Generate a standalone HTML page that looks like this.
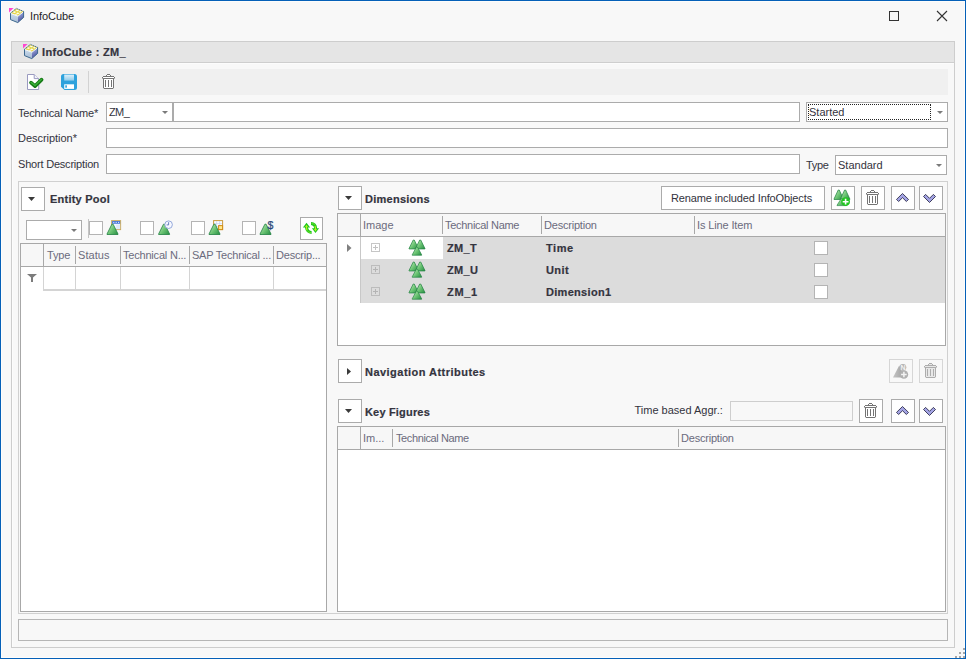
<!DOCTYPE html>
<html>
<head>
<meta charset="utf-8">
<title>InfoCube</title>
<style>
html,body{margin:0;padding:0;}
body{width:966px;height:659px;overflow:hidden;background:#f8f8f8;font-family:"Liberation Sans",sans-serif;font-size:11px;color:#33333d;}
#win{position:absolute;left:0;top:0;width:964px;height:657px;border:1px solid #0560b8;background:#f8f8f8;overflow:hidden;}
#win *{box-sizing:border-box;}
.abs{position:absolute;}
.t{position:absolute;white-space:nowrap;line-height:13px;height:13px;}
.b{font-weight:bold;color:#34343e;-webkit-text-stroke:0.2px #34343e;}
.h{color:#6b6b7d;}
.box{position:absolute;background:#fff;border:1px solid #ababab;}
.btn{position:absolute;background:#fff;border:1px solid #ababab;}
.btn.dis{background:#f8f8f8;border-color:#d6d6d6;}
.cb{position:absolute;width:14px;height:14px;background:#fff;border:1px solid #b4b4b4;}
.vsep{position:absolute;width:1px;background:#a8a8a8;}
svg{position:absolute;overflow:visible;}
</style>
</head>
<body>
<div id="win">
<!-- coordinates inside #win are page coords minus 1 -->
<div id="root" class="abs" style="left:-1px;top:-1px;width:966px;height:659px;">


<!-- SVG DEFS -->
<svg width="0" height="0" style="left:0;top:0;">
<defs>
<linearGradient id="gTri" x1="0.1" y1="0.2" x2="1" y2="0.9"><stop offset="0" stop-color="#b4e6ae"/><stop offset="0.45" stop-color="#6cc474"/><stop offset="1" stop-color="#2c9246"/></linearGradient>
<linearGradient id="gGrey" x1="0" y1="0" x2="1" y2="0"><stop offset="0" stop-color="#c4c4c4"/><stop offset="1" stop-color="#9c9c9c"/></linearGradient>
<linearGradient id="cubeL" x1="0" y1="0" x2="0" y2="1"><stop offset="0" stop-color="#ccdcec"/><stop offset="1" stop-color="#a6bcd4"/></linearGradient>
<linearGradient id="cubeR" x1="0" y1="0" x2="0.3" y2="1"><stop offset="0" stop-color="#b0c8ec"/><stop offset="1" stop-color="#4c4c9c"/></linearGradient>
<linearGradient id="saveLbl" x1="0" y1="0" x2="0" y2="1"><stop offset="0" stop-color="#dff1fb"/><stop offset="1" stop-color="#8fcbea"/></linearGradient>
<g id="cube">
  <polygon points="0,0 4.6,0 0,4.6" fill="#ff46d0"/>
  <polygon points="7.3,0.4 14.6,3.4 9,8 1.5,5.2" fill="#e6d84e"/>
  <path d="M5.2,3.2 l2,0.8 -1.6,1 -2,-0.8z M8.6,4.4 l2,0.8 -1.6,1 -2,-0.8z M8,1.6 l2,0.8 -1.4,0.9 -2,-0.8z M11.2,2.9 l1.8,0.7 -1.4,1 -1.8,-0.8z M6.6,6 l1.8,0.7 -0.6,0.6 -2.2,-0.8z" fill="#fdfdf4"/>
  <polygon points="1.5,5.2 9,8 8.8,14.6 1.5,11.6" fill="url(#cubeL)"/>
  <polygon points="9,8 14.6,3.4 14.6,9.4 8.8,14.6" fill="url(#cubeR)"/>
  <path d="M1.9,5.6 L9,8.2 L14.2,4" stroke="#fafafa" stroke-width="0.9" fill="none"/><path d="M1.5,5.2 L7.3,0.4 L14.6,3.4" stroke="#4a7098" stroke-width="1" fill="none" stroke-dasharray="1.5 0.6"/><path d="M14.6,3.4 L14.6,9.4 L8.8,14.6 L1.5,11.6 L1.5,5.2" stroke="#3c688e" stroke-width="1" fill="none" stroke-linejoin="round"/>
</g>
<g id="trashBg"><rect x="1" y="3" width="11" height="1"/><rect x="2" y="5" width="9" height="9"/><rect x="5" y="1" width="3" height="1"/></g>
<g id="trash" shape-rendering="crispEdges">
  <rect x="5" y="0" width="3" height="1"/><rect x="4" y="1" width="1" height="1"/><rect x="8" y="1" width="1" height="1"/>
  <rect x="1" y="2" width="11" height="1"/><rect x="0" y="3" width="1" height="1"/><rect x="12" y="3" width="1" height="1"/>
  <rect x="0" y="4" width="1" height="1" opacity="0.55"/><rect x="12" y="4" width="1" height="1" opacity="0.55"/>
  <rect x="1" y="4" width="11" height="1"/>
  <rect x="1" y="5" width="1" height="9"/><rect x="11" y="5" width="1" height="9"/>
  <rect x="2" y="14" width="9" height="1"/><rect x="1" y="14" width="1" height="1" opacity="0.3"/><rect x="11" y="14" width="1" height="1" opacity="0.3"/>
  <rect x="3" y="6" width="1" height="7"/><rect x="6" y="6" width="1" height="7"/><rect x="9" y="6" width="1" height="7"/>
</g>
<polygon id="tri" points="4.9,0 6.1,0 11,9.8 11,10.3 0,10.3 0,9.8"/>
<g id="tree3">
  <use href="#tri" transform="translate(0,0) scale(0.86,0.87)" fill="url(#gTri)" stroke="#1f8040" stroke-width="0.8"/>
  <use href="#tri" transform="translate(6.5,0) scale(0.86,0.87)" fill="url(#gTri)" stroke="#1f8040" stroke-width="0.8"/>
  <use href="#tri" transform="translate(3.2,7) scale(0.86,0.8)" fill="url(#gTri)" stroke="#1f8040" stroke-width="0.8"/>
</g>
<polygon id="chevUp" points="0.5,6.4 6.5,0.5 12.5,6.4 10.4,8.5 6.5,4.7 2.6,8.5"/>
<polygon id="chevDn" points="0.5,2.5 2.6,0.4 6.5,4.3 10.4,0.4 12.5,2.5 6.5,8.5"/>
</defs>
</svg>

<div class="abs" style="left:1px;top:1px;width:964px;height:657px;border:1px solid #fdfdfc;"></div>
<!-- TITLE BAR -->
<div class="t" style="left:30px;top:10px;letter-spacing:-0.08px;color:#1e1e28;">InfoCube</div>
<div class="abs" style="left:889px;top:11px;width:10px;height:10px;border:1px solid #333;"></div>
<svg style="left:937px;top:11px;" width="10" height="10" viewBox="0 0 10 10"><path d="M0 0 L10 10 M10 0 L0 10" stroke="#333" stroke-width="1.1" fill="none"/></svg>

<!-- MAIN PANEL -->
<div class="abs" id="panel" style="left:11px;top:41px;width:944px;height:607px;border:1px solid #cdcdcd;"></div>
<div class="abs" style="left:12px;top:42px;width:942px;height:20px;background:#e5e5e5;"></div>
<div class="abs" style="left:12px;top:62px;width:942px;height:1px;background:#cecece;"></div>
<div class="abs" style="left:12px;top:63px;width:942px;height:1px;background:#fcfcfc;"></div>
<div class="abs" style="left:12px;top:63px;width:1px;height:584px;background:#fcfcfc;"></div>
<div class="t b" style="left:42px;top:46px;letter-spacing:0.33px;">InfoCube : ZM_</div>

<!-- TOOLBAR -->
<div class="abs" style="left:18px;top:69px;width:930px;height:26px;background:#f0f0f0;"></div>
<div class="abs" style="left:88px;top:71px;width:1px;height:22px;background:#d2d2d2;"></div>

<!-- FORM -->
<div class="t" style="left:18px;top:107px;letter-spacing:-0.17px;">Technical Name*</div>
<div class="t" style="left:18px;top:132px;letter-spacing:-0.03px;">Description*</div>
<div class="t" style="left:18px;top:158px;letter-spacing:-0.2px;">Short Description</div>
<div class="box" style="left:106px;top:102px;width:67px;height:20px;"></div>
<div class="t" style="left:109px;top:106px;letter-spacing:-0.6px;">ZM_</div>
<div class="box" style="left:173px;top:102px;width:627px;height:20px;"></div>
<div class="box" style="left:806px;top:102px;width:142px;height:20px;"></div>
<div class="abs" style="left:808px;top:104px;width:123px;height:16px;border:1px dotted #222;"></div>
<div class="t" style="left:809px;top:106px;">Started</div>
<div class="box" style="left:106px;top:128px;width:842px;height:20px;"></div>
<div class="box" style="left:106px;top:154px;width:694px;height:20px;"></div>
<div class="t" style="left:806px;top:159px;letter-spacing:-0.34px;">Type</div>
<div class="box" style="left:835px;top:155px;width:112px;height:20px;"></div>
<div class="t" style="left:838px;top:159px;">Standard</div>

<!-- GROUP BOX -->
<div class="abs" style="left:18px;top:181px;width:930px;height:433px;border:1px solid #d0d0d0;"></div>

<!-- ENTITY POOL -->
<div class="btn" style="left:21px;top:187px;width:24px;height:24px;"></div>
<div class="t b" style="left:50px;top:193px;letter-spacing:0.23px;">Entity Pool</div>
<div class="box" style="left:26px;top:220px;width:56px;height:20px;"></div>
<div class="vsep" style="left:88px;top:219px;height:19px;background:#c4c4c4;"></div>
<div class="cb" style="left:89px;top:221px;"></div>
<div class="cb" style="left:140px;top:221px;"></div>
<div class="cb" style="left:191px;top:221px;"></div>
<div class="cb" style="left:242px;top:221px;"></div>
<div class="btn" style="left:300px;top:217px;width:23px;height:23px;"></div>

<!-- entity grid -->
<div class="abs" style="left:20px;top:243px;width:307px;height:369px;border:1px solid #a8a8a8;background:#fff;"></div>
<div class="abs" style="left:21px;top:244px;width:305px;height:22px;background:#f7f7f7;"></div>
<div class="abs" style="left:21px;top:266px;width:305px;height:1px;background:#a8a8a8;"></div>
<div class="vsep" style="left:43px;top:244px;height:22px;"></div>
<div class="vsep" style="left:75px;top:246px;height:18px;"></div>
<div class="vsep" style="left:120px;top:246px;height:18px;"></div>
<div class="vsep" style="left:189px;top:246px;height:18px;"></div>
<div class="vsep" style="left:273px;top:246px;height:18px;"></div>
<div class="t h" style="left:47px;top:249px;letter-spacing:-0.19px;">Type</div>
<div class="t h" style="left:78px;top:249px;letter-spacing:0.07px;">Status</div>
<div class="t h" style="left:123px;top:249px;letter-spacing:-0.2px;">Technical N...</div>
<div class="t h" style="left:192px;top:249px;letter-spacing:-0.22px;">SAP Technical ...</div>
<div class="t h" style="left:276px;top:249px;letter-spacing:-0.2px;">Descrip...</div>
<!-- filter row -->
<div class="abs" style="left:43px;top:289px;width:283px;height:2px;background:#d4d4d4;"></div>
<div class="vsep" style="left:43px;top:267px;height:22px;background:#d4d4d4;"></div>
<div class="vsep" style="left:75px;top:267px;height:22px;background:#d4d4d4;"></div>
<div class="vsep" style="left:120px;top:267px;height:22px;background:#d4d4d4;"></div>
<div class="vsep" style="left:189px;top:267px;height:22px;background:#d4d4d4;"></div>
<div class="vsep" style="left:273px;top:267px;height:22px;background:#d4d4d4;"></div>

<!-- DIMENSIONS -->
<div class="btn" style="left:338px;top:186px;width:24px;height:24px;"></div>
<div class="t b" style="left:365px;top:193px;letter-spacing:0.26px;">Dimensions</div>
<div class="btn" style="left:661px;top:186px;width:164px;height:24px;"></div>
<div class="t" style="left:671px;top:192px;letter-spacing:-0.12px;">Rename included InfoObjects</div>
<div class="btn" style="left:831px;top:186px;width:24px;height:24px;"></div>
<div class="btn" style="left:861px;top:186px;width:24px;height:24px;"></div>
<div class="btn" style="left:891px;top:186px;width:24px;height:24px;"></div>
<div class="btn" style="left:919px;top:186px;width:24px;height:24px;"></div>

<!-- dimension grid -->
<div class="abs" style="left:337px;top:213px;width:609px;height:133px;border:1px solid #a8a8a8;background:#fff;"></div>
<div class="abs" style="left:338px;top:214px;width:607px;height:22px;background:#f7f7f7;"></div>
<div class="abs" style="left:338px;top:236px;width:607px;height:1px;background:#a8a8a8;"></div>
<div class="vsep" style="left:360px;top:214px;height:22px;"></div>
<div class="vsep" style="left:360px;top:237px;height:66px;background:#c8c8c8;"></div>
<div class="vsep" style="left:442px;top:216px;height:18px;"></div>
<div class="vsep" style="left:541px;top:216px;height:18px;"></div>
<div class="vsep" style="left:694px;top:216px;height:18px;"></div>
<div class="t h" style="left:363px;top:219px;">Image</div>
<div class="t h" style="left:445px;top:219px;letter-spacing:-0.29px;">Technical Name</div>
<div class="t h" style="left:544px;top:219px;letter-spacing:-0.21px;">Description</div>
<div class="t h" style="left:697px;top:219px;letter-spacing:-0.13px;">Is Line Item</div>
<!-- rows -->
<div class="abs" style="left:443px;top:237px;width:502px;height:22px;background:#dcdcdc;"></div>
<div class="abs" style="left:361px;top:259px;width:584px;height:44px;background:#dcdcdc;"></div>
<div class="t b" style="left:447px;top:242px;letter-spacing:0.37px;">ZM_T</div>
<div class="t b" style="left:447px;top:264px;letter-spacing:0.37px;">ZM_U</div>
<div class="t b" style="left:447px;top:286px;letter-spacing:0.7px;">ZM_1</div>
<div class="t b" style="left:546px;top:242px;letter-spacing:0.55px;">Time</div>
<div class="t b" style="left:546px;top:264px;letter-spacing:0.4px;">Unit</div>
<div class="t b" style="left:546px;top:286px;letter-spacing:0.3px;">Dimension1</div>
<div class="cb" style="left:814px;top:241px;"></div>
<div class="cb" style="left:814px;top:263px;"></div>
<div class="cb" style="left:814px;top:285px;"></div>

<!-- NAVIGATION ATTRIBUTES -->
<div class="btn" style="left:338px;top:359px;width:24px;height:24px;"></div>
<div class="t b" style="left:365px;top:366px;letter-spacing:0.47px;">Navigation Attributes</div>
<div class="btn dis" style="left:889px;top:359px;width:24px;height:24px;"></div>
<div class="btn dis" style="left:919px;top:359px;width:24px;height:24px;"></div>

<!-- KEY FIGURES -->
<div class="btn" style="left:338px;top:399px;width:24px;height:24px;"></div>
<div class="t b" style="left:365px;top:406px;letter-spacing:0.18px;">Key Figures</div>
<div class="t" style="left:634.5px;top:404px;letter-spacing:0px;">Time based Aggr.:</div>
<div class="abs" style="left:730px;top:401px;width:123px;height:20px;border:1px solid #cecece;background:#f8f8f8;"></div>
<div class="btn" style="left:859px;top:399px;width:24px;height:24px;"></div>
<div class="btn" style="left:891px;top:399px;width:24px;height:24px;"></div>
<div class="btn" style="left:919px;top:399px;width:24px;height:24px;"></div>
<!-- key fig grid -->
<div class="abs" style="left:337px;top:426px;width:609px;height:186px;border:1px solid #a8a8a8;background:#fff;"></div>
<div class="abs" style="left:338px;top:427px;width:607px;height:22px;background:#f7f7f7;"></div>
<div class="abs" style="left:338px;top:449px;width:607px;height:1px;background:#a8a8a8;"></div>
<div class="vsep" style="left:360px;top:427px;height:22px;"></div>
<div class="vsep" style="left:392px;top:429px;height:18px;"></div>
<div class="vsep" style="left:678px;top:429px;height:18px;"></div>
<div class="t h" style="left:363px;top:432px;">Im...</div>
<div class="t h" style="left:396px;top:432px;letter-spacing:-0.39px;">Technical Name</div>
<div class="t h" style="left:681px;top:432px;letter-spacing:-0.21px;">Description</div>

<!-- STATUS BOX -->
<div class="abs" style="left:18px;top:619px;width:930px;height:22px;border:1px solid #b6b6b6;"></div>


<!-- ICONS: title + header cube -->
<svg style="left:9px;top:8px;" width="16" height="16"><use href="#cube"/></svg>
<svg style="left:23px;top:44px;" width="16" height="16"><use href="#cube"/></svg>

<!-- toolbar icons -->
<svg style="left:27px;top:74px;" width="17" height="16">
  <path d="M0.5,0.5 L7.2,0.5 L11.7,5 L11.7,15.5 L0.5,15.5 Z" fill="#fff" stroke="#9a9ac0" stroke-width="1"/>
  <path d="M7.2,0.5 L7.2,4.6 L11.5,4.6" fill="#f2f2fa" stroke="#9a9ac0" stroke-width="1"/>
  <path d="M4,8.7 L8,12.1 L14.6,5.7" fill="none" stroke="#167a16" stroke-width="3.7" stroke-linecap="round" stroke-linejoin="round"/>
  <path d="M4.1,8.4 L8,11.6 L14.4,5.4" fill="none" stroke="#3cb43c" stroke-width="1.3" stroke-linecap="round" stroke-linejoin="round"/>
</svg>
<svg style="left:61px;top:74px;" width="16" height="16">
  <path d="M2.5,0 H13.5 Q16,0 16,2.5 V13.5 Q16,16 13.5,16 H3.5 L0,12.8 V2.5 Q0,0 2.5,0 Z" fill="#2ea2dc"/>
  <rect x="3.2" y="0.6" width="9.8" height="6" fill="url(#saveLbl)"/>
  <rect x="3.2" y="10.3" width="9.8" height="4.6" fill="#fff"/>
  <rect x="4.3" y="11.3" width="1.6" height="2.4" fill="#2ea2dc"/>
</svg>
<svg style="left:102px;top:74px;" width="14" height="16"><use href="#trashBg" fill="#fff"/><use href="#trash" fill="#747474"/></svg>

<!-- combo arrows -->
<svg style="left:162px;top:111px;" width="6" height="3"><polygon points="0,0 6,0 3,3" fill="#7a7a7a"/></svg>
<svg style="left:937px;top:111px;" width="6" height="3"><polygon points="0,0 6,0 3,3" fill="#7a7a7a"/></svg>
<svg style="left:936px;top:164px;" width="6" height="3"><polygon points="0,0 6,0 3,3" fill="#7a7a7a"/></svg>
<svg style="left:71px;top:229px;" width="6" height="3"><polygon points="0,0 6,0 3,3" fill="#7a7a7a"/></svg>

<!-- collapse arrows -->
<svg style="left:28px;top:197px;" width="7" height="4"><polygon points="0,0 7,0 3.5,4" fill="#3a3a3a"/></svg>
<svg style="left:345px;top:196px;" width="7" height="4"><polygon points="0,0 7,0 3.5,4" fill="#3a3a3a"/></svg>
<svg style="left:345px;top:409px;" width="7" height="4"><polygon points="0,0 7,0 3.5,4" fill="#3a3a3a"/></svg>
<svg style="left:347px;top:368px;" width="4" height="7"><polygon points="0,0 4,3.5 0,7" fill="#3a3a3a"/></svg>


<!-- entity pool filter icons -->
<svg style="left:107px;top:220px;" width="16" height="16">
  <rect x="4.6" y="0.6" width="9" height="9" fill="#f4f8ff" stroke="#c8aa62" stroke-width="1"/>
  <rect x="5.1" y="1.1" width="8" height="2.6" fill="#3a6cd2"/>
  <path d="M6.2,2.4 h1.2 M8.6,2.4 h1.2 M11,2.4 h1.2" stroke="#fff" stroke-width="0.9"/>
  <rect x="9.2" y="4.6" width="3.9" height="4.5" fill="#dfe9f8"/>
  <use href="#tri" transform="translate(0,4.2)" fill="url(#gTri)" stroke="#1f8040" stroke-width="0.8"/>
</svg>
<svg style="left:158px;top:220px;" width="16" height="16">
  <use href="#tri" transform="translate(0.6,4.2)" fill="url(#gTri)" stroke="#1f8040" stroke-width="0.8"/>
  <circle cx="10.6" cy="4.7" r="3.8" fill="#f6f8ff" stroke="#8aa0d8" stroke-width="0.9"/>
  <path d="M10.6,2.2 V4.9 H8.6" fill="none" stroke="#5a72b8" stroke-width="0.9"/>
</svg>
<svg style="left:209px;top:220px;" width="16" height="16">
  <rect x="4.6" y="0.6" width="9" height="9" fill="#fbfcff" stroke="#c89a3c" stroke-width="1"/>
  <path d="M7.6,1 V9 M10.6,1 V9 M5,3.6 H13 M5,6.6 H13" stroke="#c8d2ee" stroke-width="0.7" fill="none"/>
  <rect x="9.6" y="5.6" width="4" height="4" fill="#ffe88a" stroke="#d08a18" stroke-width="1"/>
  <use href="#tri" transform="translate(0,4.2)" fill="url(#gTri)" stroke="#1f8040" stroke-width="0.8"/>
</svg>
<svg style="left:260px;top:220px;" width="16" height="16">
  <use href="#tri" transform="translate(0,4.2)" fill="url(#gTri)" stroke="#1f8040" stroke-width="0.8"/>
  <text x="7.6" y="9.4" font-family="Liberation Sans, sans-serif" font-size="10.5" fill="#2a4878" stroke="#2a4878" stroke-width="0.25">$</text>
</svg>

<!-- refresh -->
<svg style="left:300px;top:217px;" width="23" height="23">
  <path d="M6.5,5.8 L10.2,10.6 L8.1,10.6 Q8.4,13.7 11.6,14.1 L11.6,16.9 Q5.6,16.6 5,10.6 L2.9,10.6 Z" fill="#1ec81e"/>
  <path d="M6.5,7.7 L8,10 L7.1,10 Q7.1,12 7.6,13 L6.4,13.4 Q5.9,12 5.9,10 L5,10 Z" fill="#b4f01a"/>
  <path d="M7.2,13.6 Q8.6,15.6 11,15.6" fill="none" stroke="#7ae024" stroke-width="0.9"/>
  <path d="M15.5,16 L11.9,11.2 L14.1,11.2 Q13.9,8.4 11,7.9 L11,5.1 Q16.8,5.4 17.1,11.2 L19.1,11.2 Z" fill="#1ec81e"/>
  <path d="M15.5,14.4 L14,12 L14.9,12 Q14.9,10.2 14.4,9.2 L15.6,8.8 Q16.1,10 16.1,12 L17,12 Z" fill="#b4f01a"/>
  <path d="M11.6,6.5 Q14,6.5 15.2,8.4" fill="none" stroke="#7ae024" stroke-width="0.9"/>
</svg>

<!-- funnel -->
<svg style="left:27px;top:274px;" width="10" height="8"><path d="M0,0 H10 L6,3.6 V8 H4 V3.6 Z" fill="#7c7c7c"/></svg>

<!-- dimension header buttons -->
<svg style="left:834px;top:190px;" width="18" height="17">
  <use href="#tri" transform="translate(0,0) scale(0.86,0.92)" fill="url(#gTri)" stroke="#1f8040" stroke-width="0.8"/>
  <use href="#tri" transform="translate(6.4,0) scale(0.86,0.92)" fill="url(#gTri)" stroke="#1f8040" stroke-width="0.8"/>
  <use href="#tri" transform="translate(3,8.6) scale(0.86,0.68)" fill="url(#gTri)" stroke="#1f8040" stroke-width="0.8"/>
  <circle cx="11.6" cy="11.7" r="4.4" fill="#22c422"/>
  <path d="M11.6,8.8 V14.6 M8.7,11.7 H14.5" stroke="#fff" stroke-width="1.6"/>
</svg>
<svg style="left:866px;top:190px;" width="14" height="16"><use href="#trashBg" fill="#fff"/><use href="#trash" fill="#747474"/></svg>
<svg style="left:896px;top:193px;" width="13" height="9"><use href="#chevUp" fill="#a4a4e4" stroke="#1c1c38" stroke-width="0.8"/></svg>
<svg style="left:923px;top:194px;" width="13" height="9"><use href="#chevDn" fill="#a4a4e4" stroke="#1c1c38" stroke-width="0.8"/></svg>

<!-- dimension rows: indicator, expanders, tree icons -->
<svg style="left:347px;top:244px;" width="5" height="8"><polygon points="0,0 4.5,4 0,8" fill="#808080"/></svg>
<div class="abs" style="left:371px;top:243px;width:9px;height:9px;border:1px solid #c6c6c6;background:#fff;"></div>
<div class="abs" style="left:371px;top:265px;width:9px;height:9px;border:1px solid #bcbcbc;background:#dcdcdc;"></div>
<div class="abs" style="left:371px;top:287px;width:9px;height:9px;border:1px solid #bcbcbc;background:#dcdcdc;"></div>
<svg style="left:371px;top:243px;" width="9" height="9"><path d="M2,4.5 H7 M4.5,2 V7" stroke="#c2c2c2" stroke-width="1"/></svg>
<svg style="left:371px;top:265px;" width="9" height="9"><path d="M2,4.5 H7 M4.5,2 V7" stroke="#b4b4b4" stroke-width="1"/></svg>
<svg style="left:371px;top:287px;" width="9" height="9"><path d="M2,4.5 H7 M4.5,2 V7" stroke="#b4b4b4" stroke-width="1"/></svg>
<svg style="left:409px;top:240.4px;" width="17" height="17"><use href="#tree3"/></svg>
<svg style="left:409px;top:262.4px;" width="17" height="17"><use href="#tree3"/></svg>
<svg style="left:409px;top:284.4px;" width="17" height="17"><use href="#tree3"/></svg>

<!-- nav attr disabled icons -->
<svg style="left:893px;top:364px;" width="16" height="16">
  <polygon points="6.2,1.6 12,13.5 0,13.5" fill="url(#gGrey)"/>
  <circle cx="9.9" cy="3.3" r="3.4" fill="#b2b2b2"/>
  <text x="7.6" y="6" font-family="Liberation Sans, sans-serif" font-size="7" font-weight="bold" fill="#f4f4f4">N</text>
  <circle cx="10.9" cy="10.5" r="4.3" fill="#b0b0b0"/>
  <path d="M10.9,7.7 V13.3 M8.1,10.5 H13.7" stroke="#f4f4f4" stroke-width="1.5"/>
</svg>
<svg style="left:924px;top:363px;" width="14" height="16"><use href="#trashBg" fill="#e8e8e8"/><use href="#trash" fill="#adadad"/></svg>

<!-- key figures buttons -->
<svg style="left:864px;top:403px;" width="14" height="16"><use href="#trashBg" fill="#fff"/><use href="#trash" fill="#747474"/></svg>
<svg style="left:896px;top:406px;" width="13" height="9"><use href="#chevUp" fill="#a4a4e4" stroke="#1c1c38" stroke-width="0.8"/></svg>
<svg style="left:923px;top:407px;" width="13" height="9"><use href="#chevDn" fill="#a4a4e4" stroke="#1c1c38" stroke-width="0.8"/></svg>

<!-- resize grip -->
<div class="abs" style="left:963px;top:648px;width:2px;height:2px;background:#a6a6a6;"></div>
<div class="abs" style="left:959px;top:652px;width:2px;height:2px;background:#a6a6a6;"></div>
<div class="abs" style="left:963px;top:652px;width:2px;height:2px;background:#a6a6a6;"></div>
<div class="abs" style="left:955px;top:656px;width:2px;height:2px;background:#a6a6a6;"></div>
<div class="abs" style="left:959px;top:656px;width:2px;height:2px;background:#a6a6a6;"></div>
<div class="abs" style="left:963px;top:656px;width:2px;height:2px;background:#a6a6a6;"></div>

<!--MORE-->
</div>
</div>
</body>
</html>
